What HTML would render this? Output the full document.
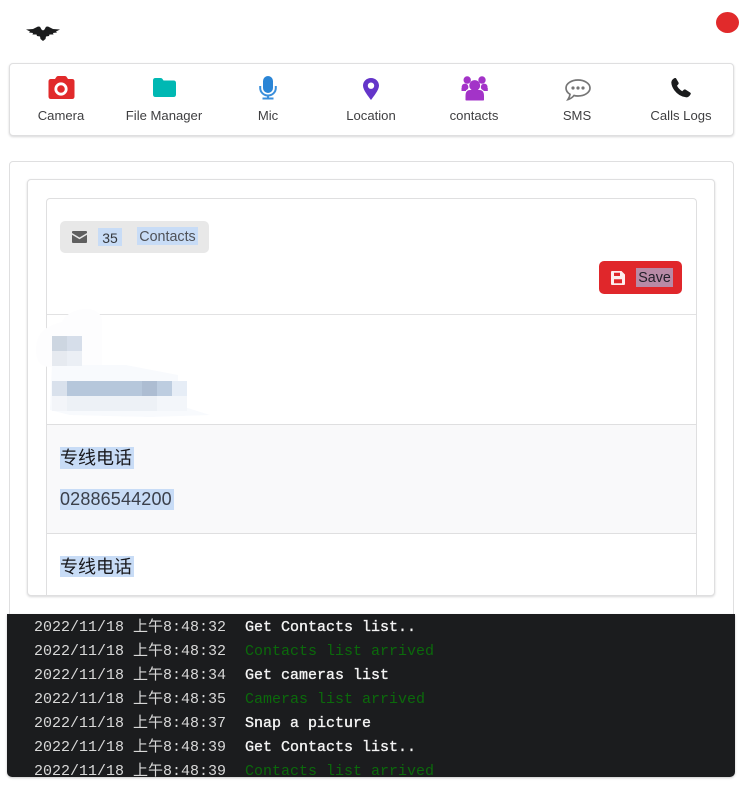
<!DOCTYPE html>
<html lang="zh">
<head>
<meta charset="utf-8">
<title>Panel</title>
<style>
html,body{margin:0;padding:0;background:#fff;}
body{width:740px;height:808px;position:relative;overflow:hidden;font-family:"Liberation Sans","Noto Sans CJK SC",sans-serif;color:#3a3a3c;}
.a{position:absolute;}
.box{position:absolute;box-sizing:border-box;background:#fff;border:1px solid #dfdfe0;border-radius:4px;}
.lab{position:absolute;top:108px;width:104px;text-align:center;font-size:13.1px;line-height:16px;color:#3f3f41;white-space:nowrap;}
.sel{background:#c8dcf6;}
.px{position:absolute;}
.log{position:absolute;left:34px;white-space:pre;font-family:"Liberation Mono","WenQuanYi Zen Hei",monospace;font-size:15px;line-height:24px;height:24px;color:#d8d8d8;}
.log b{font-weight:400;color:#f4f4f4;-webkit-text-stroke:.35px #f4f4f4;margin-left:1px;}
.log i{font-style:normal;color:#0b6a0b;margin-left:1px;}
.cjk{font-family:"Liberation Sans","Noto Sans CJK SC",sans-serif;font-size:18px;line-height:26px;color:#17171b;}
</style>
</head>
<body>

<!-- logo -->
<svg class="a" style="left:26px;top:26px" width="34" height="15" viewBox="0 0 34 15">
<path fill="#1b1c1d" d="M0 3.500L7 3L12 .5L14 .8L15.500 3.500L17 4.500L18.500 3.500L20 .8L22 .5L27 3L34 3.500L30 5.500L31 6.500L27 7L27.500 8.500L23.500 8.500L23 10L20 10.500L19.500 13L17 15L14.500 13L14 10.500L11 10L10.500 8.500L6.500 8.500L7 7L3 6.500L4 5.500Z"/>
</svg>

<!-- status dot -->
<div class="a" style="left:716px;top:12px;width:23px;height:21px;border-radius:50%;background:#e12a2b"></div>

<!-- nav card -->
<div class="box" style="left:9px;top:63px;width:725px;height:73px;box-shadow:0 1px 2px rgba(34,36,38,.18)"></div>

<!-- camera -->
<svg class="a" style="left:48px;top:76px" width="27" height="24" viewBox="0 0 27 24">
<path fill="#e12a2b" d="M3 3H7L8.500 .8Q9 0 10 0H17Q18 0 18.500 .8L20 3H24Q26.500 3 26.500 5.500V20.500Q26.500 23 24 23H3Q.5 23 .5 20.500V5.500Q.5 3 3 3Z"/>
<circle cx="13" cy="13" r="5.200" fill="none" stroke="#fff" stroke-width="2.800"/>
</svg>
<div class="lab" style="left:9px">Camera</div>

<!-- folder -->
<svg class="a" style="left:153px;top:78px" width="23" height="20" viewBox="0 0 23 20">
<path fill="#00b8b3" d="M2.500 0H7.500Q9 0 9.500 1L10.500 2.500H20.500Q23 2.500 23 5V16.500Q23 19 20.500 19H2.500Q0 19 0 16.500V2.500Q0 0 2.500 0Z"/>
</svg>
<div class="lab" style="left:112px">File Manager</div>

<!-- mic -->
<svg class="a" style="left:259px;top:76px" width="18" height="24" viewBox="0 0 18 24">
<rect x="4" y="0" width="10" height="17" rx="5" fill="#2a85d6"/>
<path d="M1.200 10V12A7.800 7.500 0 0 0 16.800 12V10M9 19.500V22M3.500 22.500H14.500" fill="none" stroke="#3a8fdc" stroke-width="2"/>
</svg>
<div class="lab" style="left:216px">Mic</div>

<!-- location -->
<svg class="a" style="left:363px;top:78px" width="16" height="22" viewBox="0 0 16 22">
<path fill="#6435c9" fill-rule="evenodd" d="M8 0C12.500 0 16 3.400 16 7.600C16 12 10.500 18.500 8 22C5.500 18.500 0 12 0 7.600C0 3.400 3.500 0 8 0ZM8 4.500A3.200 3.200 0 1 0 8 10.900A3.200 3.200 0 1 0 8 4.500Z"/>
</svg>
<div class="lab" style="left:319px">Location</div>

<!-- contacts -->
<svg class="a" style="left:461px;top:75px" width="27" height="26" viewBox="0 0 27 26">
<g fill="#a333c8">
<circle cx="6.200" cy="5" r="3.700"/><circle cx="21" cy="5" r="3.700"/>
<circle cx="4" cy="12" r="3.400"/><circle cx="23.200" cy="12" r="3.400"/>
<circle cx="13.700" cy="10.500" r="5.400"/>
<path d="M4.500 21Q4.500 15 9 15H18.500Q23 15 23 21V25Q23 25.500 22 25.500H5.500Q4.500 25.500 4.500 25Z"/>
<path d="M.5 13H5V16H.5ZM22.500 13H26.800V16H22.500Z"/>
</g>
</svg>
<div class="lab" style="left:422px">contacts</div>

<!-- sms -->
<svg class="a" style="left:565px;top:79px" width="26" height="22" viewBox="0 0 26 22">
<path d="M13 1C19.500 1 25 4.500 25 9C25 13.500 19.500 17 13 17C11.500 17 10 16.800 9 16.500C7.500 18.300 5.500 19.800 3 20.500C4 19 4.800 17.300 5 15.300C2.500 13.800 1 11.500 1 9C1 4.500 6.500 1 13 1Z" fill="none" stroke="#767676" stroke-width="1.700"/>
<circle cx="8" cy="9" r="1.600" fill="#767676"/><circle cx="13" cy="9" r="1.600" fill="#767676"/><circle cx="18" cy="9" r="1.600" fill="#767676"/>
</svg>
<div class="lab" style="left:525px">SMS</div>

<!-- phone -->
<svg class="a" style="left:671px;top:78px" width="20" height="20" viewBox="0 0 20 20">
<path fill="#1b1c1d" d="M5 .3L7.500 4.500Q8 5.500 7.200 6.400L6 7.700Q7.500 10.800 11.200 13.200L12.800 11.800Q13.800 11 14.800 11.700L19.300 14.600Q20.200 15.300 19.600 16.300Q17.800 19.700 15 19.300Q8 18.500 3.500 12.500Q.5 8.500 .3 4.500Q.3 1.800 3.500 .1Q4.400 -.3 5 .3Z"/>
</svg>
<div class="lab" style="left:629px">Calls Logs</div>

<!-- outer cards -->
<div class="box" style="left:9px;top:161px;width:725px;height:470px;"></div>
<div class="box" style="left:27px;top:179px;width:688px;height:417px;box-shadow:0 1px 2px rgba(34,36,38,.18);z-index:1"></div>
<div class="box" style="left:46px;top:198px;width:651px;height:397px;border-bottom:0;border-radius:4px 4px 0 0;z-index:2;overflow:hidden">
  <div class="a" style="left:0;top:115px;width:100%;height:1px;background:#e2e2e3"></div>
  <div class="a" style="left:0;top:225px;width:100%;height:108px;background:#f9f9fa;border-top:1px solid #dfdfe0;border-bottom:1px solid #dfdfe0;box-sizing:content-box"></div>
</div>

<div class="a" style="left:0;top:0;width:740px;height:808px;z-index:3;pointer-events:none">
  <!-- contacts label -->
  <div class="a" style="left:60px;top:221px;width:149px;height:32px;border-radius:5px;background:#e8e8e8"></div>
  <svg class="a" style="left:72px;top:231px" width="15" height="12" viewBox="0 0 15 12">
    <path fill="#5f5f5f" d="M1 0H14Q15 0 15 1V2L7.500 6.500L0 2V1Q0 0 1 0ZM0 3.800L7.500 8.300L15 3.800V11Q15 12 14 12H1Q0 12 0 11Z"/>
  </svg>
  <div class="a sel" style="left:98px;top:228px;width:24px;height:18px"></div>
  <div class="a" style="left:98px;top:228px;width:24px;height:18px;text-align:center;font-size:14px;line-height:20px;color:#35383d">35</div>
  <div class="a sel" style="left:137px;top:227px;width:61px;height:18px"></div>
  <div class="a" style="left:137px;top:228px;width:61px;height:18px;text-align:center;font-size:14.3px;line-height:19px;color:#4f5258;white-space:nowrap">Contacts</div>

  <!-- save button -->
  <div class="a" style="left:599px;top:261px;width:83px;height:33px;border-radius:5px;background:#e0272b"></div>
  <svg class="a" style="left:611px;top:271px" width="14" height="14" viewBox="0 0 14 14">
    <path fill="#fdeeee" fill-rule="evenodd" d="M1 0H10.500L14 3.500V13Q14 14 13 14H1Q0 14 0 13V1Q0 0 1 0ZM3 1.800V5H9V1.800ZM3 8.200V12.200H11V8.200Z"/>
  </svg>
  <div class="a" style="left:636px;top:268px;width:37px;height:19px;background:#b88aa6"></div>
  <div class="a" style="left:636px;top:269px;width:37px;height:19px;text-align:center;font-size:14.3px;line-height:19px;color:#23202b">Save</div>

  <!-- blurred contact -->
  <svg class="a" style="left:30px;top:305px" width="190" height="120" viewBox="0 0 190 120">
    <path fill="#fdfdfe" d="M6 45C6 25 20 20 32 17C36 8 48 3 60 4C68 6 72 10 72 16L72 62H20C10 62 6 55 6 45Z"/>
    <path fill="#f8fafd" d="M22 60L96 60L148 70V100L180 110L120 112L40 110L20 105Z"/>
  </svg>
  <div class="px" style="left:52px;top:336px;width:15px;height:15px;background:#cdd6e1"></div>
  <div class="px" style="left:67px;top:336px;width:15px;height:15px;background:#d6deea"></div>
  <div class="px" style="left:52px;top:351px;width:15px;height:15px;background:#e6eaf0"></div>
  <div class="px" style="left:67px;top:351px;width:15px;height:15px;background:#ebeff5"></div>
  <div class="px" style="left:52px;top:381px;width:15px;height:15px;background:#d9e1ec"></div>
  <div class="px" style="left:67px;top:381px;width:75px;height:15px;background:#b6c7db"></div>
  <div class="px" style="left:142px;top:381px;width:15px;height:15px;background:#adbdd2"></div>
  <div class="px" style="left:157px;top:381px;width:15px;height:15px;background:#bdcde0"></div>
  <div class="px" style="left:172px;top:381px;width:15px;height:15px;background:#e6edf6"></div>
  <div class="px" style="left:52px;top:396px;width:15px;height:15px;background:#f3f5f9"></div>
  <div class="px" style="left:67px;top:396px;width:90px;height:15px;background:#edf1f6"></div>
  <div class="px" style="left:157px;top:396px;width:30px;height:15px;background:#f3f6fa"></div>

  <!-- rows -->
  <div class="a sel" style="left:60px;top:447px;width:74px;height:22px"></div>
  <div class="a cjk" style="left:60px;top:445px;width:74px;height:26px;white-space:nowrap">专线电话</div>
  <div class="a sel" style="left:60px;top:489px;width:114px;height:21px"></div>
  <div class="a" style="left:60px;top:488px;font-size:18px;line-height:23px;color:#3a3f4a;letter-spacing:.15px;white-space:nowrap">02886544200</div>
  <div class="a sel" style="left:60px;top:556px;width:74px;height:21px"></div>
  <div class="a cjk" style="left:60px;top:554px;width:74px;height:26px;white-space:nowrap">专线电话</div>
</div>

<!-- log -->
<div class="a" style="left:7px;top:614px;width:728px;height:163px;background:#1b1c1e;border-radius:0 0 5px 5px;overflow:hidden;z-index:5;box-shadow:0 1px 2px rgba(34,36,38,.25)"></div>
<div class="a" style="left:0;top:614px;width:740px;height:163px;overflow:hidden;z-index:6">
<div class="log" style="top:2px">2022/11/18 上午8:48:32  <b>Get Contacts list..</b></div>
<div class="log" style="top:26px">2022/11/18 上午8:48:32  <i>Contacts list arrived</i></div>
<div class="log" style="top:50px">2022/11/18 上午8:48:34  <b>Get cameras list</b></div>
<div class="log" style="top:74px">2022/11/18 上午8:48:35  <i>Cameras list arrived</i></div>
<div class="log" style="top:98px">2022/11/18 上午8:48:37  <b>Snap a picture</b></div>
<div class="log" style="top:122px">2022/11/18 上午8:48:39  <b>Get Contacts list..</b></div>
<div class="log" style="top:146px">2022/11/18 上午8:48:39  <i>Contacts list arrived</i></div>
</div>

</body>
</html>
